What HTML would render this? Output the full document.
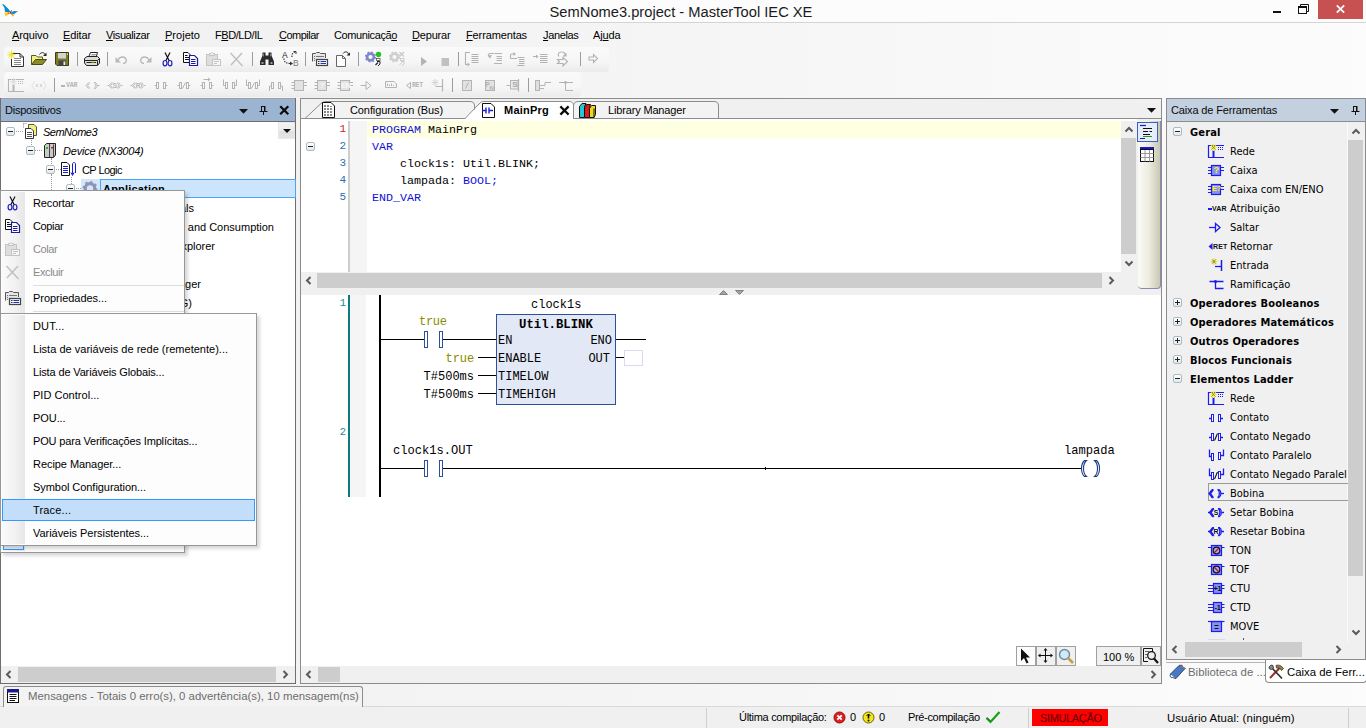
<!DOCTYPE html>
<html lang="pt-BR">
<head>
<meta charset="utf-8">
<title>SemNome3.project - MasterTool IEC XE</title>
<style>
html,body{margin:0;padding:0}
body{width:1366px;height:728px;overflow:hidden;background:#f0f0f0;position:relative;font-family:"Liberation Sans",sans-serif;font-size:11px;color:#000;-webkit-font-smoothing:antialiased}
.a{position:absolute}
.t{position:absolute;white-space:pre;line-height:14px;height:14px}
.mono{font-family:"Liberation Mono",monospace}
u{text-decoration:underline;text-underline-offset:1px}
svg{position:absolute;overflow:visible}
.sb{position:absolute;background:#f0f0f0}
.th{position:absolute;background:#cdcdcd}
.tsep{position:absolute;width:1px;height:14px;background:#9c9c9c}
.row{position:absolute;left:0;height:19px;white-space:pre;line-height:19px}
.mi{position:absolute;left:33px;white-space:pre;line-height:14px;height:14px}
.tb{position:absolute;white-space:pre;line-height:19px;height:19px;font-size:11px;font-family:"DejaVu Sans Condensed","DejaVu Sans","Liberation Sans",sans-serif}
.ld{margin-top:1px}
.ti{letter-spacing:0}
.tbb{font-weight:bold;font-size:11px;letter-spacing:0.170px}
</style>
</head>
<body>
<!-- title bar -->
<div class="a" style="left:0;top:0;width:1366px;height:22px;background:#fcfcfc"></div>
<div class="a" style="left:0;top:22px;width:1366px;height:1px;background:#d4d4d4"></div>
<div class="a" style="left:0;top:23px;width:1366px;height:683px;background:linear-gradient(to right,#f0f0f0 0%,#f4f4f4 40%,#fcfcfc 100%)"></div>
<svg style="left:0;top:0" width="22" height="20" viewBox="0 0 22 20">
<path d="M2 4L4 4.500L9 9.500L10.500 12L5 12L4.500 8Z" fill="#0a8ccc"/>
<path d="M11 12.500L14 11L18 11.200L15.500 13L14 14.200L11.500 13.500Z" fill="#0a8ccc"/>
<path d="M4 13L7 12.200L10 13L7.500 15L5.500 16.500L5.200 14.500Z" fill="#ffc808"/>
<path d="M7.500 12.300L10.200 12.800L8.500 14.300Z" fill="#e8402c"/>
<path d="M11 13.500L13 14L14 15.500L12.800 16.800L11.800 15Z" fill="#ffb010"/>
<path d="M11 13.300L13 14L12 15Z" fill="#e8302c"/>
<path d="M10.200 11.500L11.200 11.500L11.200 13.800L10.200 13.800Z" fill="#222"/>
<path d="M11 12L11.700 10" stroke="#333" stroke-width="0.600"/>
</svg>
<div class="t" style="left:0;width:1362px;top:2px;text-align:center;font-size:14.7px;line-height:20px;height:20px;color:#1b1b1b">SemNome3.project - MasterTool IEC XE</div>
<div class="a" style="left:1273px;top:11px;width:8px;height:2px;background:#111"></div>
<svg style="left:1298px;top:4px" width="11" height="10" viewBox="0 0 11 10"><path d="M2.5 2.5 V0.5 H10.5 V7.5 H8.5" fill="none" stroke="#111" stroke-width="1"/><rect x="0.5" y="2.5" width="8" height="7" fill="none" stroke="#111" stroke-width="1"/><rect x="0" y="2" width="9" height="2" fill="#111"/></svg>
<div class="a" style="left:1318px;top:0;width:45px;height:19px;background:#c75050"></div>
<svg style="left:1336px;top:5px" width="9" height="8" viewBox="0 0 9 8"><path d="M0.8 0.3 L8.2 7.7 M8.2 0.3 L0.8 7.7" stroke="#fff" stroke-width="1.7"/></svg>
<!-- menu bar -->
<div class="t" style="left:12px;top:28px;letter-spacing:-0.116px"><u>A</u>rquivo</div>
<div class="t" style="left:63px;top:28px;letter-spacing:-0.125px"><u>E</u>ditar</div>
<div class="t" style="left:106px;top:28px;letter-spacing:-0.400px"><u>V</u>isualizar</div>
<div class="t" style="left:165px;top:28px;letter-spacing:0.018px"><u>P</u>rojeto</div>
<div class="t" style="left:215px;top:28px;letter-spacing:-0.431px">F<u>B</u>D/LD/IL</div>
<div class="t" style="left:279px;top:28px;letter-spacing:-0.504px"><u>C</u>ompilar</div>
<div class="t" style="left:334px;top:28px;letter-spacing:-0.388px">Comunicaçã<u>o</u></div>
<div class="t" style="left:412px;top:28px;letter-spacing:-0.179px"><u>D</u>epurar</div>
<div class="t" style="left:466px;top:28px;letter-spacing:-0.125px"><u>F</u>erramentas</div>
<div class="t" style="left:543px;top:28px;letter-spacing:-0.346px"><u>J</u>anelas</div>
<div class="t" style="left:593px;top:28px;letter-spacing:-0.131px">Aj<u>u</u>da</div>
<!-- toolbars -->
<div class="a" style="left:4px;top:47px;width:605px;height:25px;border-radius:4px;background:linear-gradient(#fafafa,#f6f6f6 60%,#ebebeb)"></div>
<div class="a" style="left:4px;top:72px;width:577px;height:25px;border-radius:4px;background:linear-gradient(#fafafa,#f6f6f6 60%,#ebebeb)"></div>
<svg style="left:8px;top:51px" width="16" height="16" viewBox="0 0 16 16"><path d="M3.500 2.500H12L15.500 6V15.500H3.500Z" fill="#fff" stroke="#333"/><path d="M12 2.500V6H15.500" fill="none" stroke="#333"/><path d="M6 7.500H13M6 9.500H13M6 11.500H13M6 13.500H13" stroke="#8a8a8a"/><path d="M3.500 -0.500V8M-0.500 3.800H7.500M0.500 0.800L6.500 6.800M6.500 0.800L0.500 6.800" stroke="#ece21a" stroke-width="1"/></svg>
<svg style="left:31px;top:51px" width="16" height="16" viewBox="0 0 16 16"><path d="M0.500 13.500V4.500H5l1.500 1.500H11.500V8.500" fill="#f2f08a" stroke="#5a5a1a"/><path d="M0.500 13.500L4.500 8.500H15.500L11.500 13.500Z" fill="#8c8c28" stroke="#4a4a12"/><path d="M8.500 3.500C10 1 13 1 14 3.500" fill="none" stroke="#222"/><path d="M15.500 1.500V5H12Z" fill="#222"/></svg>
<svg style="left:54px;top:51px" width="16" height="16" viewBox="0 0 16 16"><path d="M1.500 1.500H14.500V14.500H3L1.500 13Z" fill="#7c7c24" stroke="#3c3c10"/><rect x="4" y="2" width="8" height="5.500" fill="#d4d4d4"/><rect x="4.500" y="9.500" width="7.500" height="5" fill="#444"/><rect x="9.500" y="10.500" width="1.800" height="3.500" fill="#eee"/><rect x="13" y="2.500" width="1" height="1.500" fill="#ddd"/></svg>
<div class="tsep" style="left:77px;top:52px"></div>
<svg style="left:84px;top:51px" width="16" height="16" viewBox="0 0 16 16"><path d="M4.500 6.500L6.500 1.500H13.500L12 6.500" fill="#fff" stroke="#222"/><path d="M7.500 3.500H12M7 5H11.500" stroke="#888" stroke-width="0.800"/><path d="M0.500 7.500L3 5.500H13.500L15.500 7.500V12L13.500 14.500H2.500L0.500 12Z" fill="#dcdcdc" stroke="#222"/><path d="M1 9.500H13.500L15.500 7.500M13.500 9.500V14" fill="none" stroke="#222"/><path d="M2.500 11.500H12" stroke="#222"/><rect x="7.500" y="10.300" width="3" height="1.200" fill="#e8d800"/></svg>
<div class="tsep" style="left:107px;top:52px"></div>
<svg style="left:114px;top:51px" width="16" height="16" viewBox="0 0 16 16"><path d="M4 9C5.500 5.500 10.500 5 12 8C13 10.500 11.500 12.500 9 12.500" fill="none" stroke="#b8b8b8" stroke-width="1.400"/><path d="M1.500 6V11.500H7Z" fill="#b8b8b8"/></svg>
<svg style="left:137px;top:51px" width="16" height="16" viewBox="0 0 16 16"><path d="M12 9C10.500 5.500 5.500 5 4 8C3 10.500 4.500 12.500 7 12.500" fill="none" stroke="#b8b8b8" stroke-width="1.400"/><path d="M14.500 6V11.500H9Z" fill="#b8b8b8"/></svg>
<svg style="left:160px;top:51px" width="16" height="16" viewBox="0 0 16 16"><path d="M5 1.500L9.300 10M10 1.500L5.700 10" fill="none" stroke="#111" stroke-width="1.200"/><ellipse cx="5" cy="12.200" rx="1.900" ry="2.700" fill="none" stroke="#2222bb" stroke-width="1.200"/><ellipse cx="10" cy="12.200" rx="1.900" ry="2.700" fill="none" stroke="#2222bb" stroke-width="1.200"/></svg>
<svg style="left:183px;top:51px" width="16" height="16" viewBox="0 0 16 16"><path d="M0.500 1.500H5L7.500 4V11.500H0.500Z" fill="#fff" stroke="#111"/><path d="M2 4.500H4.500M2 6.500H6M2 8.500H6" stroke="#111"/><path d="M6.500 4.500H11.500L14.500 7.500V14.500H6.500Z" fill="#fff" stroke="#1c1c9c" stroke-width="1.200"/><path d="M8 8.500H12.500M8 10.500H12.500M8 12.500H12.500" stroke="#1c1c9c"/></svg>
<svg style="left:206px;top:51px" width="16" height="16" viewBox="0 0 16 16"><rect x="0.500" y="3.500" width="11" height="11" fill="#dedede" stroke="#c4c4c4"/><path d="M3.500 4.500V2.500H5L6 1.500L7 2.500H8.500V4.500Z" fill="#ececec" stroke="#c4c4c4"/><rect x="6.500" y="8.500" width="8" height="6" fill="#f6f6f6" stroke="#c4c4c4"/><path d="M8 10.500H13M8 12.500H11" stroke="#c4c4c4"/></svg>
<svg style="left:229px;top:51px" width="16" height="16" viewBox="0 0 16 16"><path d="M1.500 2L13.500 15M13 2L2 14" stroke="#c0c0c0" stroke-width="1.500"/></svg>
<div class="tsep" style="left:252px;top:52px"></div>
<svg style="left:259px;top:51px" width="16" height="16" viewBox="0 0 16 16"><path d="M3.500 1.500H6.500V4.500H9.500V1.500H12.500V4.500L15 10.500V14H9.500V8.500H6.500V14H1V10.500L3.500 4.500Z" fill="#2a2a2a"/><path d="M4.500 2.500V5.500M11.500 2.500V5.500" stroke="#777"/><rect x="2.500" y="11" width="2" height="2" fill="#999"/><rect x="11.500" y="11" width="2" height="2" fill="#999"/></svg>
<div class="t" style="left:282px;top:50px;font-size:8.500px;color:#222;line-height:10px;height:10px">A</div>
<div class="t" style="left:293px;top:58px;font-size:8.500px;color:#777;line-height:10px;height:10px">B</div>
<svg style="left:282px;top:51px" width="16" height="16" viewBox="0 0 16 16"><path d="M10 6C9.500 3.500 11 1.500 13 1" fill="none" stroke="#333" stroke-dasharray="1.300 1.200" stroke-width="1.200"/><path d="M11.500 0.500H14V3" fill="none" stroke="#333"/><path d="M2 7.500C2 11 4.500 12.500 8.500 12.500" fill="none" stroke="#333" stroke-dasharray="1.300 1.200" stroke-width="1.200"/><path d="M8 10.500L11 12.500L8 14.500Z" fill="#333"/></svg>
<div class="tsep" style="left:305px;top:52px"></div>
<svg style="left:312px;top:51px" width="16" height="16" viewBox="0 0 16 16"><path d="M0.500 10.500V2.500H3.500L4.500 1.500H7.500L8.500 2.500H13.500V7" fill="#e6e6e6" stroke="#555"/><path d="M2 5.500H3M4 5.500H12M2 7.500H3M2 9.500H3" stroke="#777"/><rect x="4.500" y="8.500" width="11" height="6" fill="#f4f4f4" stroke="#444" stroke-width="1.200"/><path d="M6 10.500H7.500M6 12.500H7.500" stroke="#333"/><path d="M8.500 10.500H14M8.500 12.500H14" stroke="#2233bb" stroke-width="1.200"/></svg>
<svg style="left:335px;top:51px" width="16" height="16" viewBox="0 0 16 16"><path d="M1.500 4.500H7.500L10.500 7.500V15.500H1.500Z" fill="#fff" stroke="#666"/><path d="M7.500 4.500V7.500H10.500" fill="none" stroke="#666"/><path d="M8 2.500C10 0 13 0.500 13.500 3" fill="none" stroke="#222"/><path d="M15 1.500V4.500H11.500Z" fill="#222"/></svg>
<div class="tsep" style="left:358px;top:52px"></div>
<svg style="left:365px;top:51px" width="16" height="16" viewBox="0 0 16 16"><circle cx="5.5" cy="6" r="3.400" fill="none" stroke="#8086c8" stroke-width="2.600"/><circle cx="5.5" cy="6" r="4.900" fill="none" stroke="#8086c8" stroke-width="1.400" stroke-dasharray="1.900 1.950"/><circle cx="13.500" cy="3.500" r="2.400" fill="#12d012" stroke="#0a8a0a" stroke-width="0.500"/><rect x="11.500" y="7.500" width="3.500" height="2" fill="#fff" stroke="#555" stroke-width="0.800"/><path d="M12 10.500H15V13L13 15" fill="none" stroke="#222" stroke-width="1"/><path d="M10.500 14L13 11.500" stroke="#226" stroke-width="1.200"/></svg>
<svg style="left:389px;top:51px" width="16" height="16" viewBox="0 0 16 16"><circle cx="5.5" cy="6" r="3.400" fill="none" stroke="#cfcfcf" stroke-width="2.600"/><circle cx="5.5" cy="6" r="4.900" fill="none" stroke="#cfcfcf" stroke-width="1.400" stroke-dasharray="1.900 1.950"/><path d="M10.500 1L15 5.500M15 1L10.500 5.500" stroke="#c8c8c8" stroke-width="1.200"/><rect x="11.500" y="7.500" width="3.500" height="2" fill="#f4f4f4" stroke="#c8c8c8" stroke-width="0.800"/><path d="M12 10.500H15V13L13 15M10.500 14L13 11.500" fill="none" stroke="#c8c8c8" stroke-width="1"/></svg>
<svg style="left:415px;top:51px" width="16" height="16" viewBox="0 0 16 16"><path d="M6 6L12 10.5L6 15Z" fill="#b4b4b4"/></svg>
<svg style="left:437px;top:51px" width="16" height="16" viewBox="0 0 16 16"><rect x="4.500" y="7" width="7.500" height="8" fill="#c0c0c0"/></svg>
<div class="tsep" style="left:458px;top:52px"></div>
<svg style="left:463px;top:51px" width="16" height="16" viewBox="0 0 16 16"><path d="M7 1.500H2.500V13.500H5" fill="none" stroke="#b2b2b2" stroke-width="1.100"/><path d="M4.500 11.500L7 13.500L4.500 15.500Z" fill="#b2b2b2"/><path d="M8.500 3.500H15.500M8.500 5.500H15.500M8.500 7.500H15.500M8.500 9.500H15.500M8.500 11.500H15.500" stroke="#b2b2b2"/></svg>
<svg style="left:487px;top:51px" width="16" height="16" viewBox="0 0 16 16"><path d="M7 2.500H3Q1.500 2.500 1.500 4V5" fill="none" stroke="#b2b2b2" stroke-width="1.100"/><path d="M0.500 4.500L3 7.500L5 4Z" fill="#b2b2b2"/><path d="M7.500 2.500H15M9.500 5.500H15M9.500 7.500H15M9.500 9.500H15M7 12.500H15" stroke="#b2b2b2"/></svg>
<svg style="left:509px;top:51px" width="16" height="16" viewBox="0 0 16 16"><path d="M1.500 7.500V4.500Q1.500 3 3 3H5M1.500 7.500H8" fill="none" stroke="#b2b2b2" stroke-width="1.100"/><path d="M4.500 1L7 3L4.500 5Z" fill="#b2b2b2"/><path d="M8.500 6.500H15.500M10 8.500H15.500M10 10.500H15.500M10 12.500H15.500M8.500 14.500H15.500" stroke="#b2b2b2"/></svg>
<svg style="left:532px;top:51px" width="16" height="16" viewBox="0 0 16 16"><path d="M1 5.500H5" fill="none" stroke="#b2b2b2" stroke-width="1.100"/><path d="M4 3.500L6.500 5.500L4 7.500Z" fill="#b2b2b2"/><path d="M8 3.500H15.500M8 5.500H15.500M8 7.500H15.500M8 9.500H15.500M8 11.500H15.500" stroke="#b2b2b2"/></svg>
<svg style="left:555px;top:51px" width="16" height="16" viewBox="0 0 16 16"><path d="M4 5.500C2 3.500 4 0.500 7 1C9.500 1 10.500 3 10 4" fill="none" stroke="#b2b2b2" stroke-width="1.100"/><path d="M11.500 1.500V5.500H7.500Z" fill="#b2b2b2"/><path d="M2.500 8.500H8V6.500L12.500 10.500L8 15V12.500H2.500L4.500 10.500Z" fill="none" stroke="#b2b2b2" stroke-width="1.100"/></svg>
<div class="tsep" style="left:580px;top:52px"></div>
<svg style="left:585px;top:51px" width="16" height="16" viewBox="0 0 16 16"><path d="M4 6H8.500V3.500L12.500 7.500L8.500 11.500V9H4Z" fill="none" stroke="#b2b2b2" stroke-width="1.100"/></svg>
<svg style="left:8px;top:77px" width="16" height="16" viewBox="0 0 16 16"><path d="M16 2.500H0.500V14.500H16" fill="none" stroke="#b4b4b4" stroke-width="1.100"/><path d="M5.500 7.500V14.500" stroke="#b4b4b4" stroke-width="2"/><path d="M10 4.500H16M10 6.500H16" stroke="#b4b4b4" stroke-dasharray="1 1"/><path d="M5.500 1V8M2 4.500H9M3 2L8 7M8 2L3 7" stroke="#dcdcdc" stroke-width="0.900"/></svg>
<svg style="left:31px;top:77px" width="16" height="16" viewBox="0 0 16 16"><path d="M3.500 4.500L1 8.500L3.500 12.500M12.500 4.500L15 8.500L12.500 12.500" fill="none" stroke="#cfcfcf" stroke-dasharray="1.200 0.800"/><path d="M5 7L7 10M7 7L5 10M9 7L11 10M11 7L9 10" stroke="#cfcfcf" stroke-width="0.900"/></svg>
<div class="tsep" style="left:54px;top:78px"></div>
<div class="a" style="left:61px;top:85px;width:4px;height:2px;background:#b4b4b4"></div>
<div class="t mono" style="left:66px;top:81px;font-size:6.500px;font-weight:bold;color:#b4b4b4;letter-spacing:-0.100px;line-height:10px;height:10px">VAR</div>
<svg style="left:84px;top:77px" width="16" height="16" viewBox="0 0 16 16"><path d="M4.500 5.500L2 8.500L4.500 11.500M6 5.500L3.500 8.500L6 11.500" fill="none" stroke="#b4b4b4" stroke-width="0.900"/><path d="M10 5.500C12 6.500 12 10.500 10 11.500M11.500 5.500C13.500 6.500 13.500 10.500 11.500 11.500M10 5.500H11.500M10 11.500H11.500" fill="none" stroke="#b4b4b4" stroke-width="0.900"/><path d="M13 8.500H15.500" stroke="#b4b4b4"/></svg>
<svg style="left:107px;top:77px" width="16" height="16" viewBox="0 0 16 16"><path d="M0.500 8.500H2M14 8.500H15.500" stroke="#b4b4b4"/><path d="M4.500 5.500L2 8.500L4.500 11.500M6 5.500L3.500 8.500L6 11.500" fill="none" stroke="#b4b4b4" stroke-width="0.900"/><path d="M10 5.500C12 6.500 12 10.500 10 11.500M11.500 5.500C13.500 6.500 13.500 10.500 11.500 11.500" fill="none" stroke="#b4b4b4" stroke-width="0.900"/></svg>
<div class="t" style="left:112px;width:6px;text-align:center;top:81px;font-size:6.500px;font-weight:bold;color:#b4b4b4;line-height:10px;height:10px">S</div>
<svg style="left:130px;top:77px" width="16" height="16" viewBox="0 0 16 16"><path d="M0.500 8.500H2M14 8.500H15.500" stroke="#b4b4b4"/><path d="M4.500 5.500L2 8.500L4.500 11.500M6 5.500L3.500 8.500L6 11.500" fill="none" stroke="#b4b4b4" stroke-width="0.900"/><path d="M10 5.500C12 6.500 12 10.500 10 11.500M11.500 5.500C13.500 6.500 13.500 10.500 11.500 11.500" fill="none" stroke="#b4b4b4" stroke-width="0.900"/></svg>
<div class="t" style="left:135px;width:6px;text-align:center;top:81px;font-size:6.500px;font-weight:bold;color:#b4b4b4;line-height:10px;height:10px">R</div>
<svg style="left:153px;top:77px" width="16" height="16" viewBox="0 0 16 16"><path d="M1.500 8.500H3.500M12.500 8.500H14.500" stroke="#b4b4b4"/><rect x="3.500" y="5.500" width="2" height="6" fill="none" stroke="#b4b4b4"/><rect x="10.500" y="5.500" width="2" height="6" fill="none" stroke="#b4b4b4"/></svg>
<svg style="left:176px;top:77px" width="16" height="16" viewBox="0 0 16 16"><path d="M1.500 8.500H3.500M12.500 8.500H14.500" stroke="#b4b4b4"/><rect x="3.500" y="5.500" width="2" height="6" fill="none" stroke="#b4b4b4"/><rect x="10.500" y="5.500" width="2" height="6" fill="none" stroke="#b4b4b4"/><path d="M6.500 11.500L9.500 5.500" stroke="#b4b4b4"/></svg>
<svg style="left:199px;top:77px" width="16" height="16" viewBox="0 0 16 16"><path d="M1.500 8.500H3.500M12.500 8.500H14.500" stroke="#b4b4b4"/><rect x="3.500" y="5.500" width="2" height="6" fill="none" stroke="#b4b4b4"/><rect x="10.500" y="5.500" width="2" height="6" fill="none" stroke="#b4b4b4"/><path d="M4.500 2.500H10" stroke="#b4b4b4"/><path d="M9 0.500L11.500 2.500L9 4.500Z" fill="#b4b4b4"/></svg>
<svg style="left:222px;top:77px" width="16" height="16" viewBox="0 0 16 16"><path d="M1.500 2.500V8.500H3.500M12.500 8.500H14.500V2.500" fill="none" stroke="#b4b4b4"/><rect x="3.500" y="5.500" width="2" height="6" fill="none" stroke="#b4b4b4"/><rect x="10.500" y="5.500" width="2" height="6" fill="none" stroke="#b4b4b4"/></svg>
<svg style="left:245px;top:77px" width="16" height="16" viewBox="0 0 16 16"><path d="M1.500 2.500V8.500H3.500M12.500 8.500H14.500V2.500" fill="none" stroke="#b4b4b4"/><rect x="3.500" y="5.500" width="2" height="6" fill="none" stroke="#b4b4b4"/><rect x="10.500" y="5.500" width="2" height="6" fill="none" stroke="#b4b4b4"/><path d="M6.500 11.500L9.500 5.500" stroke="#b4b4b4"/></svg>
<svg style="left:268px;top:77px" width="16" height="16" viewBox="0 0 16 16"><path d="M1.500 14V9H3.500M12.500 9H14.500V14" fill="none" stroke="#b4b4b4"/><rect x="3.500" y="5.500" width="2" height="6" fill="none" stroke="#b4b4b4"/><rect x="10.500" y="5.500" width="2" height="6" fill="none" stroke="#b4b4b4"/></svg>
<svg style="left:291px;top:77px" width="16" height="16" viewBox="0 0 16 16"><rect x="3.500" y="3.500" width="9" height="10" fill="#e2e2e2" stroke="#b4b4b4"/><path d="M0.500 5.500H3.500M0.500 8.500H3.500M0.500 11.500H3.500M12.500 5.500H16M12.500 8.500H16" stroke="#b4b4b4"/></svg>
<svg style="left:314px;top:77px" width="16" height="16" viewBox="0 0 16 16"><rect x="3.500" y="3.500" width="9" height="10" fill="#e2e2e2" stroke="#b4b4b4"/><path d="M0.500 5.500H3.500M0.500 8.500H3.500M0.500 11.500H3.500M12.500 5.500H16M12.500 8.500H16" stroke="#b4b4b4"/></svg>
<div class="t" style="left:318px;width:8px;text-align:center;top:81px;font-size:7.500px;font-weight:bold;color:#f8f8f8;line-height:10px;height:10px;letter-spacing:-0.400px">?</div>
<svg style="left:337px;top:77px" width="16" height="16" viewBox="0 0 16 16"><rect x="3.500" y="3.500" width="9" height="10" fill="#e2e2e2" stroke="#b4b4b4"/><path d="M0.500 5.500H3.500M0.500 8.500H3.500M0.500 11.500H3.500M12.500 5.500H16M12.500 8.500H16" stroke="#b4b4b4"/></svg>
<div class="t" style="left:341px;width:8px;text-align:center;top:81px;font-size:7.500px;font-weight:bold;color:#f8f8f8;line-height:10px;height:10px;letter-spacing:-0.400px">EN</div>
<svg style="left:358px;top:77px" width="16" height="16" viewBox="0 0 16 16"><path d="M2.500 8.500H8" stroke="#b4b4b4"/><path d="M8 4.500L13 8.500L8 12.500Z" fill="none" stroke="#b4b4b4"/></svg>
<svg style="left:383px;top:77px" width="16" height="16" viewBox="0 0 16 16"><path d="M2.500 4.500H11L13.500 7V10.500H2.500Z" fill="#f6f6f6" stroke="#b4b4b4"/><path d="M4.500 6.500V9M6.500 7.500V9M8.500 6.500V9M10.500 8V9" stroke="#b4b4b4"/></svg>
<svg style="left:406px;top:77px" width="16" height="16" viewBox="0 0 16 16"><path d="M4.500 5.500L0.500 8.500L4.500 11.500Z" fill="none" stroke="#b4b4b4"/></svg>
<div class="t mono" style="left:412px;top:81px;font-size:6.500px;font-weight:bold;color:#b4b4b4;line-height:10px;height:10px;letter-spacing:-0.300px">RET</div>
<svg style="left:429px;top:77px" width="16" height="16" viewBox="0 0 16 16"><path d="M6 2V9M2.500 5.500H9.500M3.500 3L8.500 8M8.500 3L3.500 8" stroke="#d2d2d2" stroke-width="0.900"/><path d="M6.500 9.500H13" stroke="#b4b4b4"/><path d="M13.500 2V14.500" stroke="#b4b4b4" stroke-width="1.200"/></svg>
<div class="tsep" style="left:452px;top:78px"></div>
<svg style="left:459px;top:77px" width="16" height="16" viewBox="0 0 16 16"><rect x="3.500" y="3.500" width="9" height="10" fill="#e2e2e2" stroke="#b4b4b4"/><path d="M6.500 11.500L9.500 5.500" stroke="#b4b4b4" stroke-width="1"/></svg>
<svg style="left:482px;top:77px" width="16" height="16" viewBox="0 0 16 16"><rect x="3.500" y="3.500" width="9" height="10" fill="#e2e2e2" stroke="#b4b4b4"/></svg>
<div class="t" style="left:485.500px;top:80px;font-size:6.500px;font-weight:bold;color:#b4b4b4;line-height:10px;height:10px">P</div>
<div class="t" style="left:489.500px;top:83px;font-size:6px;font-weight:bold;color:#b4b4b4;line-height:10px;height:10px">N</div>
<svg style="left:505px;top:77px" width="16" height="16" viewBox="0 0 16 16"><rect x="5.500" y="3.500" width="7.500" height="8.500" fill="#ececec" stroke="#b4b4b4"/><path d="M1.500 8.500H5.500" stroke="#b4b4b4"/><path d="M13.500 2V14.500" stroke="#b4b4b4" stroke-width="1.200"/></svg>
<div class="t" style="left:511.500px;width:7px;text-align:center;top:80px;font-size:8px;font-weight:bold;color:#a8a8a8;line-height:10px;height:10px">S</div>
<div class="tsep" style="left:528px;top:78px"></div>
<svg style="left:535px;top:77px" width="16" height="16" viewBox="0 0 16 16"><rect x="0.500" y="3.500" width="4" height="10" fill="#dedede" stroke="#b4b4b4"/><path d="M4.500 8.500H10V5.500H16M4.500 11.500H9" fill="none" stroke="#b4b4b4"/></svg>
<svg style="left:558px;top:77px" width="16" height="16" viewBox="0 0 16 16"><path d="M1 5.500H15M7.500 5.500V13.500H15" fill="none" stroke="#b4b4b4"/><circle cx="7.500" cy="5.500" r="1.400" fill="#b4b4b4"/></svg>
<!-- left panel: Dispositivos -->
<div class="a" style="left:0;top:98px;width:296px;height:586px;background:#6e6e6e"></div>
<div class="a" style="left:1px;top:99px;width:294px;height:22px;background:#9bb4d2"></div>
<div class="a" style="left:1px;top:98px;width:294px;height:1px;background:#a0a0a0"></div>
<div class="a" style="left:1px;top:122px;width:294px;height:561px;background:#fff"></div>
<div class="t" style="left:5px;top:103px;color:#0a0a0a;letter-spacing:-0.224px">Dispositivos</div>
<svg style="left:239px;top:109px" width="9" height="5" viewBox="0 0 9 5"><path d="M0 0H9L4.5 4.8Z" fill="#111"/></svg>
<svg style="left:259px;top:105px" width="9" height="10" viewBox="0 0 9 10"><rect x="2.500" y="1.500" width="3" height="5" fill="none" stroke="#111" stroke-width="1"/><rect x="5" y="1" width="1.500" height="5" fill="#111"/><rect x="0.500" y="6" width="8" height="1" fill="#111"/><rect x="4" y="7" width="1" height="3" fill="#111"/></svg>
<svg style="left:280px;top:106px" width="9" height="9" viewBox="0 0 9 9"><path d="M1 1L7.500 7.500M7.500 1L1 7.500" stroke="#0a0a0a" stroke-width="2.200" stroke-linecap="square"/></svg>
<!-- tree dotted connectors -->
<div class="a" style="left:14px;top:131px;width:9px;border-top:1px dotted #9a9a9a"></div>
<div class="a" style="left:31px;top:137px;height:10px;border-left:1px dotted #9a9a9a"></div>
<div class="a" style="left:34px;top:150px;width:8px;border-top:1px dotted #9a9a9a"></div>
<div class="a" style="left:51px;top:158px;height:8px;border-left:1px dotted #9a9a9a"></div>
<div class="a" style="left:54px;top:169px;width:7px;border-top:1px dotted #9a9a9a"></div>
<div class="a" style="left:51px;top:174px;height:20px;border-left:1px dotted #9a9a9a"></div>
<div class="a" style="left:71px;top:177px;height:7px;border-left:1px dotted #9a9a9a"></div>
<div class="a" style="left:74px;top:188px;width:7px;border-top:1px dotted #9a9a9a"></div>
<!-- expanders -->
<div class="a" style="left:6px;top:127px;width:7px;height:7px;border:1px solid #a9bcc2;border-radius:2px;background:linear-gradient(#fff,#e3e8ea)"></div><div class="a" style="left:8px;top:131px;width:5px;height:1px;background:#222"></div>
<div class="a" style="left:26px;top:146px;width:7px;height:7px;border:1px solid #a9bcc2;border-radius:2px;background:linear-gradient(#fff,#e3e8ea)"></div><div class="a" style="left:28px;top:150px;width:5px;height:1px;background:#222"></div>
<div class="a" style="left:46px;top:165px;width:7px;height:7px;border:1px solid #a9bcc2;border-radius:2px;background:linear-gradient(#fff,#e3e8ea)"></div><div class="a" style="left:48px;top:169px;width:5px;height:1px;background:#222"></div>
<div class="a" style="left:66px;top:184px;width:7px;height:7px;border:1px solid #a9bcc2;border-radius:2px;background:linear-gradient(#fff,#e3e8ea)"></div><div class="a" style="left:68px;top:188px;width:5px;height:1px;background:#222"></div>
<!-- tree icons -->
<svg style="left:23px;top:123px" width="15" height="16" viewBox="0 0 15 16"><path d="M0.500 0.500H3.500" stroke="#888" stroke-dasharray="1 1"/><path d="M0.500 0.500V5" stroke="#888" stroke-dasharray="1 1"/><path d="M5.500 1.500H11L13.500 4V12.500H5.500Z" fill="#f4ee7a" stroke="#555"/><path d="M2.500 5.500H8L10.500 8V15.500H2.500Z" fill="#fff" stroke="#333"/><path d="M4 9.500H9M4 11.500H9M4 13.500H9" stroke="#555"/></svg>
<svg style="left:43px;top:142px" width="14" height="16" viewBox="0 0 14 16"><path d="M1.500 3.500L3.500 1.500H12.500V13L10.500 15.500H1.500Z" fill="#c9c9c9" stroke="#222"/><path d="M6.500 2V15M10.500 2.500V15" stroke="#444"/><rect x="3" y="5" width="2" height="2" fill="#18c018"/><rect x="8" y="5" width="2" height="1.500" fill="#d02020"/></svg>
<svg style="left:60px;top:161px" width="17" height="16" viewBox="0 0 17 16"><path d="M1.500 1.500H7L9.500 4V14.500H1.500Z" fill="#fff" stroke="#111"/><path d="M3 5.500H8M3 7.500H8M3 9.500H8M3 11.500H8" stroke="#1c1cd8"/><path d="M12.500 3C12.500 1 15.500 1 15.500 3V12" fill="none" stroke="#1c1cd8"/><path d="M12.500 3V13.500M11 11.500L12.500 14.500L14 11.500" fill="none" stroke="#1c1cd8"/></svg>
<div class="a" style="left:81px;top:179px;width:19px;height:19px;background:#d4e6fa"></div>
<svg style="left:82px;top:180px" width="16" height="16" viewBox="0 0 16 16"><circle cx="8" cy="8.500" r="4.800" fill="none" stroke="#8f93b8" stroke-width="3.200"/><circle cx="8" cy="8.500" r="6.600" fill="none" stroke="#8f93b8" stroke-width="1.800" stroke-dasharray="2.300 2.880"/></svg>
<!-- selected row -->
<div class="a" style="left:100px;top:179px;width:194px;height:17px;background:#cce4fc;border:1px solid #4ea3f7"></div>
<!-- tree labels -->
<div class="t" style="left:43px;top:125px;font-style:italic;letter-spacing:-0.510px">SemNome3</div>
<div class="t" style="left:63px;top:144px;font-style:italic;letter-spacing:-0.218px">Device (NX3004)</div>
<div class="t" style="left:82px;top:163px;letter-spacing:-0.580px">CP Logic</div>
<div class="t" style="left:103px;top:182px;font-weight:bold;letter-spacing:0.192px">Application</div>
<div class="t" style="left:0;width:194px;text-align:right;top:201px">Bill of Materials</div>
<div class="t" style="left:0;width:274px;text-align:right;top:220px">Configuration and Consumption</div>
<div class="t" style="left:0;width:215px;text-align:right;top:239px">Diagnostic Explorer</div>
<div class="t" style="left:0;width:201px;text-align:right;top:277px">Library Manager</div>
<div class="t" style="left:0;width:192px;text-align:right;top:296px">MainPrg (PRG)</div>
<!-- tree vscroll dropdown button -->
<div class="a" style="left:278px;top:122px;width:17px;height:17px;background:linear-gradient(#f3f3f3,#ececec 50%,#dfdfdf 50%,#e4e4e4);border:1px solid #e8e8e8;box-sizing:border-box"></div>
<svg style="left:283px;top:129px" width="8" height="4" viewBox="0 0 8 4"><path d="M0 0H8L4 4Z" fill="#111"/></svg>
<!-- tree hscroll -->
<div class="sb" style="left:1px;top:666px;width:294px;height:17px"></div>
<div class="th" style="left:18px;top:667px;width:258px;height:15px"></div>
<svg style="left:5px;top:670px" width="7" height="9" viewBox="0 0 7 9"><path d="M5.500 1L2 4.500L5.500 8" fill="none" stroke="#5a5a5a" stroke-width="2"/></svg>
<svg style="left:282px;top:670px" width="7" height="9" viewBox="0 0 7 9"><path d="M1.500 1L5 4.500L1.500 8" fill="none" stroke="#5a5a5a" stroke-width="2"/></svg>
<!-- center editor panel -->
<div class="a" style="left:300px;top:98px;width:862px;height:586px;background:#8c8c8c"></div>
<div class="a" style="left:301px;top:99px;width:860px;height:19px;background:#f0f0f0"></div>
<div class="a" style="left:301px;top:119px;width:860px;height:564px;background:#fff"></div>
<!-- tabs -->
<svg style="left:301px;top:100px" width="860" height="19" viewBox="0 0 860 19">
<path d="M4 18.500 L20 3.500 Q21.500 2 24 1.500 H169 Q173.500 1.500 173.500 6 V18.500" fill="#f3f3f3" stroke="#8c8c8c"/>
<path d="M272.500 18.500 V6 Q272.500 1.500 277 1.500 H413 Q417.500 1.500 417.500 6 V18.500" fill="#f3f3f3" stroke="#8c8c8c"/>
<path d="M0 18.500 H164 L178 4 Q180 1.500 183 1.500 H268 Q272.500 1.500 272.500 6 V18.500 H860" fill="none" stroke="#8c8c8c"/>
<path d="M164.500 19 L178.500 4.500 Q180 2 183 2 H268 Q272 2 272 6 V19Z" fill="#fff"/>
</svg>
<svg style="left:322px;top:102px" width="13" height="16" viewBox="0 0 13 16"><path d="M0.500 0.500H9L12.500 4V15.500H0.500Z" fill="#fff" stroke="#111"/><path d="M2 3H4V5H2ZM5 3H7V5H5ZM8 4H10V5H8ZM2 6H4V8H2ZM5 6H7V8H5ZM8 6H10V8H8ZM2 9H4V11H2ZM5 9H7V11H5ZM8 9H10V11H8ZM2 12H4V14H2ZM5 12H7V14H5ZM8 12H10V14H8Z" fill="#8a8a8a"/></svg>
<div class="t" style="left:350px;top:103px;letter-spacing:-0.094px">Configuration (Bus)</div>
<svg style="left:482px;top:103px" width="13" height="15" viewBox="0 0 13 15"><path d="M0.500 0.500H9L12.500 4V14.500H0.500Z" fill="#fff" stroke="#111"/><path d="M0 7.500H3.500M7.500 7.500H11M4 4.500V10.500M7 4.500V10.500" stroke="#1c1cd8" stroke-width="1.400"/></svg>
<div class="t" style="left:504px;top:103px;font-weight:bold;letter-spacing:0.228px">MainPrg</div>
<svg style="left:560px;top:106px" width="9" height="9" viewBox="0 0 9 9"><path d="M1.200 1.200L7.800 7.800M7.800 1.200L1.200 7.800" stroke="#0a0a0a" stroke-width="2.300" stroke-linecap="square"/></svg>
<svg style="left:579px;top:102px" width="17" height="16" viewBox="0 0 17 16"><path d="M0.500 4.500L3 1.500H7L5.500 4.500V15.500H0.500Z" fill="#22c8d8" stroke="#111"/><path d="M5.500 5.500L7.500 2.500H11.500L10.500 5.500V15.500H5.500Z" fill="#e01818" stroke="#111"/><path d="M10.500 6.500L12.500 3.500H16.500V12.500L15 15.500H10.500Z" fill="#f0d818" stroke="#111"/><path d="M15 6.500V15.500" stroke="#111"/></svg>
<div class="t" style="left:608px;top:103px;letter-spacing:-0.160px">Library Manager</div>
<svg style="left:1147px;top:108px" width="9" height="5" viewBox="0 0 9 5"><path d="M0 0H9L4.500 4.800Z" fill="#111"/></svg>
<!-- declaration editor -->
<div class="a" style="left:348px;top:121px;width:2px;height:151px;background:#cecece"></div>
<div class="a" style="left:350px;top:121px;width:17px;height:151px;background:#f5f5f5"></div>
<div class="a" style="left:367px;top:121px;width:754px;height:17px;background:#ffffe1"></div>
<div class="t mono" style="left:320px;width:26px;text-align:right;top:122px;font-size:11px;color:#d02020">1</div>
<div class="t mono" style="left:320px;width:26px;text-align:right;top:139px;font-size:11px;color:#2b6fb5">2</div>
<div class="t mono" style="left:320px;width:26px;text-align:right;top:156px;font-size:11px;color:#2b6fb5">3</div>
<div class="t mono" style="left:320px;width:26px;text-align:right;top:173px;font-size:11px;color:#2b6fb5">4</div>
<div class="t mono" style="left:320px;width:26px;text-align:right;top:190px;font-size:11px;color:#2b6fb5">5</div>
<div class="a" style="left:306px;top:142px;width:7px;height:7px;border:1px solid #a9bcc2;border-radius:2px;background:linear-gradient(#fff,#e3e8ea)"></div><div class="a" style="left:308px;top:146px;width:5px;height:1px;background:#222"></div>
<div class="t mono" style="left:372px;top:123px;font-size:11.670px"><span style="color:#1010d8">PROGRAM</span> MainPrg</div>
<div class="t mono" style="left:372px;top:140px;font-size:11.670px;color:#1010d8">VAR</div>
<div class="t mono" style="left:372px;top:157px;font-size:11.670px">    clock1s: Util.BLINK;</div>
<div class="t mono" style="left:372px;top:174px;font-size:11.670px">    lampada: <span style="color:#1010d8">BOOL;</span></div>
<div class="t mono" style="left:372px;top:191px;font-size:11.670px;color:#1010d8">END_VAR</div>
<!-- decl vscroll -->
<div class="sb" style="left:1121px;top:121px;width:17px;height:151px"></div>
<div class="th" style="left:1121px;top:138px;width:15px;height:116px"></div>
<svg style="left:1124px;top:126px" width="10" height="7" viewBox="0 0 10 7"><path d="M1.500 5.500L5 2L8.500 5.500" fill="none" stroke="#5a5a5a" stroke-width="2"/></svg>
<svg style="left:1124px;top:260px" width="10" height="7" viewBox="0 0 10 7"><path d="M1.500 1.500L5 5L8.500 1.500" fill="none" stroke="#5a5a5a" stroke-width="2"/></svg>
<!-- decl hscroll -->
<div class="sb" style="left:301px;top:272px;width:837px;height:17px"></div>
<div class="th" style="left:317px;top:273px;width:785px;height:15px"></div>
<svg style="left:305px;top:276px" width="7" height="9" viewBox="0 0 7 9"><path d="M5.500 1L2 4.500L5.500 8" fill="none" stroke="#5a5a5a" stroke-width="2"/></svg>
<svg style="left:1108px;top:276px" width="7" height="9" viewBox="0 0 7 9"><path d="M1.500 1L5 4.500L1.500 8" fill="none" stroke="#5a5a5a" stroke-width="2"/></svg>
<!-- right tool strip -->
<div class="a" style="left:1137px;top:119px;width:24px;height:176px;background:#f0f0f0"></div>
<div class="a" style="left:1138px;top:121px;width:22px;height:167px;background:linear-gradient(to right,#fbfbf6,#ecebdf 50%,#c9c8b2);border-radius:0 0 4px 4px;border-bottom:1px solid #8a8ab4;border-right:1px solid #8a8ab4"></div>
<div class="a" style="left:1137px;top:122px;width:19px;height:18px;background:#e6ecf8;border:1px solid #3b5fc4"></div>
<svg style="left:1140px;top:125px" width="14" height="14" viewBox="0 0 14 14"><path d="M0 0.500H6" stroke="#1818d0" stroke-width="1.200"/><path d="M3 3.500H12M3 6.500H8M3 9.500H10M9.500 6.500H12" stroke="#111"/><path d="M3 11.500H12" stroke="#18a018"/><path d="M0 13.500H5" stroke="#1818d0"/></svg>
<svg style="left:1140px;top:147px" width="15" height="16" viewBox="0 0 15 16"><rect x="0.500" y="2.500" width="13" height="12" fill="#fff" stroke="#111"/><path d="M0 1H14" stroke="#1818d0" stroke-width="2"/><path d="M0.500 6.500H13.500M0.500 10.500H13.500M5 3V14.500M9.500 3V14.500" stroke="#999"/></svg>
<!-- splitter -->
<div class="a" style="left:301px;top:289px;width:860px;height:6px;background:#f0f0f0"></div>
<svg style="left:719px;top:290px" width="26" height="5" viewBox="0 0 26 5"><path d="M0.500 4.500L4.500 0.500L8.500 4.500Z" fill="#a4a4a4" stroke="#6e6e6e" stroke-width="0.800"/><path d="M16.500 0.500H24.500L20.500 4.500Z" fill="#a4a4a4" stroke="#6e6e6e" stroke-width="0.800"/></svg>
<!-- ladder editor -->
<div class="a" style="left:348px;top:295px;width:2px;height:202px;background:#0e7c7c"></div>
<div class="a" style="left:350px;top:295px;width:16px;height:202px;background:#f5f5f5"></div>
<div class="a" style="left:379px;top:295px;width:2px;height:202px;background:#000"></div>
<div class="t mono ld" style="left:320px;width:26px;text-align:right;top:295px;font-size:10.500px;color:#1a8c8c">1</div>
<div class="t mono ld" style="left:320px;width:26px;text-align:right;top:424px;font-size:10.500px;color:#1a8c8c">2</div>
<!-- network 1 -->
<div class="a" style="left:381px;top:339px;width:116px;height:1px;background:#000"></div>
<div class="a" style="left:424px;top:331px;width:2px;height:15px;border:1px solid #2e4f9a;background:#fff"></div>
<div class="a" style="left:439px;top:331px;width:2px;height:15px;border:1px solid #2e4f9a;background:#fff"></div>
<div class="a" style="left:428px;top:339px;width:11px;height:1px;background:#fff"></div>
<div class="t mono ld" style="left:419px;top:314px;font-size:12px;color:#8b8b00;letter-spacing:-0.300px">true</div>
<div class="t mono ld" style="left:531px;top:297px;font-size:12px">clock1s</div>
<div class="a" style="left:496px;top:314px;width:118px;height:89px;border:1px solid #2e4f9a;background:#e2e8f6"></div>
<div class="t mono ld" style="left:519px;top:317px;font-size:12.300px;font-weight:bold">Util.BLINK</div>
<div class="t mono ld" style="left:498px;top:333px;font-size:12px">EN</div>
<div class="t mono ld" style="left:498px;top:351px;font-size:12px">ENABLE</div>
<div class="t mono ld" style="left:498px;top:369px;font-size:12px">TIMELOW</div>
<div class="t mono ld" style="left:498px;top:387px;font-size:12px">TIMEHIGH</div>
<div class="t mono ld" style="left:562px;width:50px;text-align:right;top:333px;font-size:12px">ENO</div>
<div class="t mono ld" style="left:560px;width:50px;text-align:right;top:351px;font-size:12px">OUT</div>
<div class="t mono ld" style="left:423px;width:51px;text-align:right;top:351px;font-size:12px;color:#8b8b00;letter-spacing:-0.100px">true</div>
<div class="t mono ld" style="left:413px;width:61px;text-align:right;top:369px;font-size:12px">T#500ms</div>
<div class="t mono ld" style="left:413px;width:61px;text-align:right;top:387px;font-size:12px">T#500ms</div>
<div class="a" style="left:478px;top:357px;width:18px;height:1px;background:#000"></div>
<div class="a" style="left:478px;top:375px;width:18px;height:1px;background:#000"></div>
<div class="a" style="left:478px;top:393px;width:18px;height:1px;background:#000"></div>
<div class="a" style="left:616px;top:339px;width:30px;height:1px;background:#000"></div>
<div class="a" style="left:616px;top:357px;width:8px;height:1px;background:#000"></div>
<div class="a" style="left:624px;top:350px;width:17px;height:14px;border:1px solid #d9d9f3;background:#fff"></div>
<!-- network 2 -->
<div class="t mono ld" style="left:393px;top:443px;font-size:12.100px">clock1s.OUT</div>
<div class="a" style="left:381px;top:468px;width:701px;height:1px;background:#000"></div>
<div class="a" style="left:424px;top:460px;width:2px;height:15px;border:1px solid #2e4f9a;background:#fff"></div>
<div class="a" style="left:439px;top:460px;width:2px;height:15px;border:1px solid #2e4f9a;background:#fff"></div>
<div class="a" style="left:428px;top:468px;width:11px;height:1px;background:#fff"></div>
<div class="a" style="left:765px;top:467px;width:1px;height:3px;background:#000"></div>
<div class="t mono ld" style="left:1064px;top:443px;font-size:12.100px">lampada</div>
<svg style="left:1080px;top:459px" width="22" height="19" viewBox="0 0 22 19"><path d="M6.500 1.500C2.500 5 2.500 14 6.500 17.500H4.500C0.500 14 0.500 5 4.500 1.500Z" fill="#fff" stroke="#1f3f8a" stroke-width="1.100"/><path d="M14.500 1.500C18.500 5 18.500 14 14.500 17.500H16.500C20.500 14 20.500 5 16.500 1.500Z" fill="#fff" stroke="#1f3f8a" stroke-width="1.100"/></svg>
<!-- bottom-right tools -->
<div class="a" style="left:1016px;top:646px;width:20px;height:20px;background:#fdfdfd;border:1px solid #a0a0a0;box-sizing:border-box"></div>
<div class="a" style="left:1036px;top:646px;width:20px;height:20px;background:#f0f0f0;border:1px solid #a0a0a0;box-sizing:border-box"></div>
<div class="a" style="left:1056px;top:646px;width:20px;height:20px;background:#f0f0f0;border:1px solid #a0a0a0;box-sizing:border-box"></div>
<svg style="left:1020px;top:648px" width="12" height="17" viewBox="0 0 12 17"><path d="M1 0.500V13L4 10L6.500 15.500L8.500 14.500L6 9.500H10Z" fill="#111"/></svg>
<svg style="left:1038px;top:648px" width="16" height="16" viewBox="0 0 16 16"><path d="M7.500 1V14M1 7.500H14" stroke="#111"/><path d="M7.500 0L9.500 2.500H5.500ZM7.500 15L9.500 12.500H5.500ZM0 7.500L2.500 5.500V9.500ZM15 7.500L12.500 5.500V9.500Z" fill="#111"/></svg>
<svg style="left:1058px;top:648px" width="17" height="17" viewBox="0 0 17 17"><circle cx="6.500" cy="6.500" r="5" fill="#cfeaf6" stroke="#6a8aa8" stroke-width="1.400"/><path d="M10 10L15 15" stroke="#c8a040" stroke-width="2.600"/></svg>
<div class="a" style="left:1096px;top:646px;width:45px;height:20px;background:#f0f0f0;border:1px solid #a0a0a0;box-sizing:border-box"></div>
<div class="t" style="left:1103px;top:650px;font-size:11px">100 %</div>
<div class="a" style="left:1141px;top:646px;width:20px;height:20px;background:#f0f0f0;border:1px solid #a0a0a0;box-sizing:border-box"></div>
<svg style="left:1143px;top:648px" width="16" height="16" viewBox="0 0 16 16"><path d="M0.500 0.500H9.500V4M0.500 0.500V13.500H5" fill="none" stroke="#111"/><circle cx="8.500" cy="7.500" r="3.800" fill="#eee" stroke="#111" stroke-width="1.300"/><path d="M11 10.500L15 15" stroke="#111" stroke-width="2.200"/><path d="M2 3.500H6M2 6.500H4M2 9.500H4" stroke="#666"/></svg>
<!-- bottom hscroll -->
<div class="sb" style="left:301px;top:666px;width:860px;height:17px"></div>
<div class="th" style="left:318px;top:667px;width:22px;height:15px"></div>
<svg style="left:305px;top:670px" width="7" height="9" viewBox="0 0 7 9"><path d="M5.500 1L2 4.500L5.500 8" fill="none" stroke="#5a5a5a" stroke-width="2"/></svg>
<svg style="left:1150px;top:670px" width="7" height="9" viewBox="0 0 7 9"><path d="M1.500 1L5 4.500L1.500 8" fill="none" stroke="#5a5a5a" stroke-width="2"/></svg>
<!-- right panel: Caixa de Ferramentas -->
<div class="a" style="left:1166px;top:98px;width:200px;height:562px;background:#8c8c8c"></div>
<div class="a" style="left:1167px;top:99px;width:198px;height:22px;background:#c3d0e0"></div>
<div class="a" style="left:1167px;top:122px;width:198px;height:537px;background:#f0f0f0"></div>
<div class="t" style="left:1171px;top:103px;color:#0a0a0a;letter-spacing:-0.141px">Caixa de Ferramentas</div>
<svg style="left:1330px;top:109px" width="9" height="5" viewBox="0 0 9 5"><path d="M0 0H9L4.500 4.800Z" fill="#111"/></svg>
<svg style="left:1351px;top:105px" width="9" height="10" viewBox="0 0 9 10"><rect x="2.500" y="1.500" width="3" height="5" fill="none" stroke="#111" stroke-width="1"/><rect x="5" y="1" width="1.500" height="5" fill="#111"/><rect x="0.500" y="6" width="8" height="1" fill="#111"/><rect x="4" y="7" width="1" height="3" fill="#111"/></svg>
<div class="sb" style="left:1347px;top:122px;width:18px;height:520px;border-left:1px solid #fafafa;box-sizing:border-box"></div>
<div class="th" style="left:1348px;top:140px;width:15px;height:436px"></div>
<svg style="left:1351px;top:128px" width="10" height="7" viewBox="0 0 10 7"><path d="M1.500 5.500L5 2L8.500 5.500" fill="none" stroke="#5a5a5a" stroke-width="2"/></svg>
<svg style="left:1351px;top:629px" width="10" height="7" viewBox="0 0 10 7"><path d="M1.500 1.500L5 5L8.500 1.500" fill="none" stroke="#5a5a5a" stroke-width="2"/></svg>
<div class="sb" style="left:1167px;top:642px;width:198px;height:17px"></div>
<div class="th" style="left:1185px;top:642px;width:117px;height:15px"></div>
<svg style="left:1171px;top:645px" width="7" height="9" viewBox="0 0 7 9"><path d="M5.500 1L2 4.500L5.500 8" fill="none" stroke="#5a5a5a" stroke-width="2"/></svg>
<svg style="left:1335px;top:645px" width="7" height="9" viewBox="0 0 7 9"><path d="M1.500 1L5 4.500L1.500 8" fill="none" stroke="#5a5a5a" stroke-width="2"/></svg>
<div class="a" style="left:1173px;top:127px;width:7px;height:7px;border:1px solid #a9bcc2;border-radius:2px;background:linear-gradient(#fff,#e3e8ea)"></div><div class="a" style="left:1175px;top:131px;width:5px;height:1px;background:#222"></div>
<div class="tb tbb" style="left:1190px;top:123px">Geral</div>
<svg style="left:1208px;top:144px" width="17" height="16" viewBox="0 0 17 16"><path d="M16 1.500H0.500V13.500H16" fill="none" stroke="#1c1cf0" stroke-width="1.200"/><path d="M5.500 6.500V13.500" stroke="#1c1cf0" stroke-width="2"/><path d="M10 3.500H16M10 5.500H16" stroke="#1c1cf0" stroke-dasharray="1 1"/><path d="M5.500 0V7M2 3.500H9M3 1L8 6M8 1L3 6" stroke="#f4ec20" stroke-width="1.100"/><path d="M3.500 1.500L7.500 5.500M7.500 1.500L3.500 5.500" stroke="#555" stroke-width="0.500"/></svg>
<div class="tb ti" style="left:1230px;top:142px">Rede</div>
<svg style="left:1208px;top:162px" width="17" height="16" viewBox="0 0 17 16"><rect x="3.500" y="3.500" width="9" height="10" fill="#8590f2" stroke="#1c1cf0" stroke-width="1.200"/><path d="M0 5.500H3.500M0 8.500H3.500M0 11.500H3.500M12.500 5.500H16M12.500 8.500H16" stroke="#1c1cf0" stroke-width="1.200"/></svg>
<div class="t" style="left:1212px;width:8px;text-align:center;top:165px;font-size:9px;font-weight:bold;color:#fff020;line-height:10px;height:10px;letter-spacing:-0.500px">?</div>
<div class="tb ti" style="left:1230px;top:161px">Caixa</div>
<svg style="left:1208px;top:181px" width="17" height="16" viewBox="0 0 17 16"><rect x="3.500" y="3.500" width="9" height="10" fill="#8590f2" stroke="#1c1cf0" stroke-width="1.200"/><path d="M0 5.500H3.500M0 8.500H3.500M0 11.500H3.500M12.500 5.500H16M12.500 8.500H16" stroke="#1c1cf0" stroke-width="1.200"/></svg>
<div class="t" style="left:1212px;width:8px;text-align:center;top:184px;font-size:7.5px;font-weight:bold;color:#fff020;line-height:10px;height:10px;letter-spacing:-0.500px">E?</div>
<div class="tb ti" style="left:1230px;top:180px">Caixa com EN/ENO</div>
<div class="a" style="left:1208px;top:208px;width:4px;height:2px;background:#1c1cf0"></div>
<div class="t" style="left:1212px;top:204px;font-size:7px;font-weight:bold;color:#111;line-height:10px;height:10px;letter-spacing:0.100px">VAR</div>
<div class="tb ti" style="left:1230px;top:199px">Atribuição</div>
<svg style="left:1208px;top:219px" width="17" height="16" viewBox="0 0 17 16"><path d="M1 8.500H8" stroke="#1c1cf0" stroke-width="1.300"/><path d="M7.500 4.500L12 8.500L7.500 12.500Z" fill="none" stroke="#1c1cf0" stroke-width="1.300"/></svg>
<div class="tb ti" style="left:1230px;top:218px">Saltar</div>
<svg style="left:1208px;top:238px" width="17" height="16" viewBox="0 0 17 16"><path d="M4.500 5L0.500 8.500L4.500 12Z" fill="#1c1cf0"/></svg>
<div class="t" style="left:1213px;top:242px;font-size:7px;font-weight:bold;color:#111;line-height:10px;height:10px;letter-spacing:0.100px">RET</div>
<div class="tb ti" style="left:1230px;top:237px">Retornar</div>
<svg style="left:1208px;top:257px" width="17" height="16" viewBox="0 0 17 16"><path d="M6 1V8M2.500 4.500H9.500M3.500 2L8.500 7M8.500 2L3.500 7" stroke="#e8d820" stroke-width="1"/><path d="M4.500 2.500L7.500 6.500M7.500 2.500L4.500 6.500" stroke="#555" stroke-width="0.600"/><path d="M7 9.500H13" stroke="#1c1cf0" stroke-width="1.300"/><path d="M13.500 3V14" stroke="#1c1cf0" stroke-width="1.500"/></svg>
<div class="tb ti" style="left:1230px;top:256px">Entrada</div>
<svg style="left:1208px;top:276px" width="17" height="16" viewBox="0 0 17 16"><path d="M1.500 5.500H15.500M7.500 5.500V12.500H15.500" fill="none" stroke="#1c1cf0" stroke-width="1.300"/><circle cx="7.500" cy="5.500" r="1.500" fill="#1c1cf0"/></svg>
<div class="tb ti" style="left:1230px;top:275px">Ramificação</div>
<div class="a" style="left:1173px;top:298px;width:7px;height:7px;border:1px solid #a9bcc2;border-radius:2px;background:linear-gradient(#fff,#e3e8ea)"></div><div class="a" style="left:1175px;top:302px;width:5px;height:1px;background:#222"></div>
<div class="a" style="left:1177px;top:300px;width:1px;height:5px;background:#222"></div>
<div class="tb tbb" style="left:1190px;top:294px">Operadores Booleanos</div>
<div class="a" style="left:1173px;top:317px;width:7px;height:7px;border:1px solid #a9bcc2;border-radius:2px;background:linear-gradient(#fff,#e3e8ea)"></div><div class="a" style="left:1175px;top:321px;width:5px;height:1px;background:#222"></div>
<div class="a" style="left:1177px;top:319px;width:1px;height:5px;background:#222"></div>
<div class="tb tbb" style="left:1190px;top:313px">Operadores Matemáticos</div>
<div class="a" style="left:1173px;top:336px;width:7px;height:7px;border:1px solid #a9bcc2;border-radius:2px;background:linear-gradient(#fff,#e3e8ea)"></div><div class="a" style="left:1175px;top:340px;width:5px;height:1px;background:#222"></div>
<div class="a" style="left:1177px;top:338px;width:1px;height:5px;background:#222"></div>
<div class="tb tbb" style="left:1190px;top:332px">Outros Operadores</div>
<div class="a" style="left:1173px;top:355px;width:7px;height:7px;border:1px solid #a9bcc2;border-radius:2px;background:linear-gradient(#fff,#e3e8ea)"></div><div class="a" style="left:1175px;top:359px;width:5px;height:1px;background:#222"></div>
<div class="a" style="left:1177px;top:357px;width:1px;height:5px;background:#222"></div>
<div class="tb tbb" style="left:1190px;top:351px">Blocos Funcionais</div>
<div class="a" style="left:1173px;top:374px;width:7px;height:7px;border:1px solid #a9bcc2;border-radius:2px;background:linear-gradient(#fff,#e3e8ea)"></div><div class="a" style="left:1175px;top:378px;width:5px;height:1px;background:#222"></div>
<div class="tb tbb" style="left:1190px;top:370px">Elementos Ladder</div>
<svg style="left:1208px;top:391px" width="17" height="16" viewBox="0 0 17 16"><path d="M16 1.500H0.500V13.500H16" fill="none" stroke="#1c1cf0" stroke-width="1.200"/><path d="M5.500 6.500V13.500" stroke="#1c1cf0" stroke-width="2"/><path d="M10 3.500H16M10 5.500H16" stroke="#1c1cf0" stroke-dasharray="1 1"/><path d="M5.500 0V7M2 3.500H9M3 1L8 6M8 1L3 6" stroke="#f4ec20" stroke-width="1.100"/><path d="M3.500 1.500L7.500 5.500M7.500 1.500L3.500 5.500" stroke="#555" stroke-width="0.500"/></svg>
<div class="tb ti" style="left:1230px;top:389px">Rede</div>
<svg style="left:1208px;top:409px" width="17" height="16" viewBox="0 0 17 16"><path d="M1 9.500H3.500M12.500 9.500H15" stroke="#1c1cf0" stroke-width="1.300"/><rect x="3.500" y="5.500" width="2" height="7" fill="#fff" stroke="#1c1cf0" stroke-width="1"/><rect x="10.500" y="5.500" width="2" height="7" fill="#fff" stroke="#1c1cf0" stroke-width="1"/></svg>
<div class="tb ti" style="left:1230px;top:408px">Contato</div>
<svg style="left:1208px;top:428px" width="17" height="16" viewBox="0 0 17 16"><path d="M1 9.500H3.500M12.500 9.500H15" stroke="#1c1cf0" stroke-width="1.300"/><rect x="3.500" y="5.500" width="2" height="7" fill="#fff" stroke="#1c1cf0" stroke-width="1"/><rect x="10.500" y="5.500" width="2" height="7" fill="#fff" stroke="#1c1cf0" stroke-width="1"/><path d="M6.500 12.500L9.500 5.500" stroke="#111" stroke-width="1.100"/></svg>
<div class="tb ti" style="left:1230px;top:427px">Contato Negado</div>
<svg style="left:1208px;top:447px" width="17" height="16" viewBox="0 0 17 16"><path d="M1.500 2.500V9.500H3.500M12.500 8.500H15.500V2.500" fill="none" stroke="#1c1cf0" stroke-width="1.300"/><rect x="3.500" y="6.500" width="2" height="7" fill="#fff" stroke="#1c1cf0" stroke-width="1"/><rect x="10.500" y="5.500" width="2" height="7" fill="#fff" stroke="#1c1cf0" stroke-width="1"/></svg>
<div class="tb ti" style="left:1230px;top:446px">Contato Paralelo</div>
<svg style="left:1208px;top:466px" width="17" height="16" viewBox="0 0 17 16"><path d="M1.500 2.500V9.500H3.500M12.500 8.500H15.500V2.500" fill="none" stroke="#1c1cf0" stroke-width="1.300"/><rect x="3.500" y="6.500" width="2" height="7" fill="#fff" stroke="#1c1cf0" stroke-width="1"/><rect x="10.500" y="5.500" width="2" height="7" fill="#fff" stroke="#1c1cf0" stroke-width="1"/><path d="M6.500 13L9.500 6" stroke="#111" stroke-width="1.100"/></svg>
<div class="tb ti" style="left:1230px;top:465px;width:117px;overflow:hidden">Contato Negado Paralelo</div>
<div class="a" style="left:1208px;top:483px;width:140px;height:18px;border:1px solid #9a9a9a;border-right:none;box-sizing:border-box"></div>
<svg style="left:1208px;top:485px" width="17" height="16" viewBox="0 0 17 16"><path d="M4 4.500L1 8.500L4 12.500M5.500 4.500L2.500 8.500L5.500 12.500M4 4.500H5.500M4 12.500H5.500" fill="none" stroke="#1c1cf0" stroke-width="1.250"/><path d="M9.500 4.500C12 6 12 11 9.500 12.500M11 4.500C13.500 6 13.500 11 11 12.500M9.500 4.500H11M9.500 12.500H11" fill="none" stroke="#1c1cf0" stroke-width="1.250"/><path d="M13 8.500H16" stroke="#1c1cf0" stroke-width="1.300"/></svg>
<div class="tb ti" style="left:1230px;top:484px">Bobina</div>
<svg style="left:1208px;top:504px" width="17" height="16" viewBox="0 0 17 16"><path d="M0 8.500H2M14 8.500H16" stroke="#1c1cf0" stroke-width="1.300"/><path d="M4.500 4.500L1.500 8.500L4.500 12.500M6 4.500L3 8.500L6 12.500M4.500 4.500H6M4.500 12.500H6" fill="none" stroke="#1c1cf0" stroke-width="1.250"/><path d="M10 4.500C12.500 6 12.500 11 10 12.500M11.500 4.500C14 6 14 11 11.500 12.500M10 4.500H11.500M10 12.500H11.500" fill="none" stroke="#1c1cf0" stroke-width="1.250"/></svg>
<div class="t" style="left:1213px;width:6px;text-align:center;top:508px;font-size:7px;font-weight:bold;color:#111;line-height:10px;height:10px">S</div>
<div class="tb ti" style="left:1230px;top:503px">Setar Bobina</div>
<svg style="left:1208px;top:523px" width="17" height="16" viewBox="0 0 17 16"><path d="M0 8.500H2M14 8.500H16" stroke="#1c1cf0" stroke-width="1.300"/><path d="M4.500 4.500L1.500 8.500L4.500 12.500M6 4.500L3 8.500L6 12.500M4.500 4.500H6M4.500 12.500H6" fill="none" stroke="#1c1cf0" stroke-width="1.250"/><path d="M10 4.500C12.500 6 12.500 11 10 12.500M11.500 4.500C14 6 14 11 11.500 12.500M10 4.500H11.500M10 12.500H11.500" fill="none" stroke="#1c1cf0" stroke-width="1.250"/></svg>
<div class="t" style="left:1213px;width:6px;text-align:center;top:527px;font-size:7px;font-weight:bold;color:#111;line-height:10px;height:10px">R</div>
<div class="tb ti" style="left:1230px;top:522px">Resetar Bobina</div>
<svg style="left:1208px;top:542px" width="17" height="16" viewBox="0 0 17 16"><rect x="3.500" y="3.500" width="10" height="10" fill="#8590f2" stroke="#1c1cf0" stroke-width="1.200"/><path d="M0 5.500H3.500M13.500 5.500H16.500" stroke="#1c1cf0" stroke-width="1.200"/><circle cx="8.500" cy="8.500" r="3.300" fill="#a8a8f8" stroke="#111" stroke-width="1.200"/><path d="M6.500 10.500L10.500 6.500" stroke="#c01010" stroke-width="1.200"/></svg>
<div class="tb ti" style="left:1230px;top:541px">TON</div>
<svg style="left:1208px;top:561px" width="17" height="16" viewBox="0 0 17 16"><rect x="3.500" y="3.500" width="10" height="10" fill="#8590f2" stroke="#1c1cf0" stroke-width="1.200"/><path d="M0 5.500H3.500M13.500 5.500H16.500" stroke="#1c1cf0" stroke-width="1.200"/><circle cx="8.500" cy="8.500" r="3.300" fill="#a8a8f8" stroke="#111" stroke-width="1.200"/><path d="M6.500 6.500L10.500 10.500" stroke="#c01010" stroke-width="1.200"/></svg>
<div class="tb ti" style="left:1230px;top:560px">TOF</div>
<svg style="left:1208px;top:580px" width="17" height="16" viewBox="0 0 17 16"><rect x="5.500" y="3.500" width="8" height="10" fill="#8590f2" stroke="#1c1cf0" stroke-width="1.200"/><path d="M0 5.500H5.500M0 8.500H5.500M0 11.500H5.500M13.500 5.500H16.500M13.500 8.500H16.500" stroke="#1c1cf0" stroke-width="1.200"/></svg>
<div class="t" style="left:1212.500px;width:10px;text-align:center;top:584px;font-size:7.500px;font-weight:bold;color:#111;line-height:10px;height:10px;letter-spacing:-0.300px">+1</div>
<div class="tb ti" style="left:1230px;top:579px">CTU</div>
<svg style="left:1208px;top:599px" width="17" height="16" viewBox="0 0 17 16"><rect x="5.500" y="3.500" width="8" height="10" fill="#8590f2" stroke="#1c1cf0" stroke-width="1.200"/><path d="M0 5.500H5.500M0 8.500H5.500M0 11.500H5.500M13.500 5.500H16.500M13.500 8.500H16.500" stroke="#1c1cf0" stroke-width="1.200"/></svg>
<div class="t" style="left:1212.500px;width:10px;text-align:center;top:603px;font-size:7.500px;font-weight:bold;color:#111;line-height:10px;height:10px;letter-spacing:-0.300px">-1</div>
<div class="tb ti" style="left:1230px;top:598px">CTD</div>
<svg style="left:1208px;top:618px" width="17" height="16" viewBox="0 0 17 16"><rect x="3.500" y="3.500" width="10" height="10" fill="#8590f2" stroke="#1c1cf0" stroke-width="1.200"/><path d="M0 3.500H16.500" stroke="#1c1cf0" stroke-width="1.200"/><path d="M6.500 7.500H10.500M6.500 10.500H10.500" stroke="#111" stroke-width="1.200"/></svg>
<div class="tb ti" style="left:1230px;top:617px">MOVE</div>
<div class="a" style="left:1208px;top:639px;width:17px;height:1px;background:#d8d8ee"></div>
<div class="a" style="left:1243px;top:638px;width:1px;height:2px;background:#555"></div>
<div class="a" style="left:1166px;top:662px;width:100px;height:1px;background:#b4b4b4"></div>
<div class="a" style="left:1265px;top:660px;width:102px;height:23px;border:1px solid #8c8c8c;border-top:none;border-radius:0 0 4px 4px;box-sizing:border-box;background:#fff"></div>
<svg style="left:1169px;top:664px" width="17" height="16" viewBox="0 0 17 16"><path d="M1.500 10L10 1.500L15.500 5L7 14.500Z" fill="#4a78c0" stroke="#28487c"/><path d="M1.500 10C0.500 12 1.500 14 3.500 13.500L7 14.500" fill="#e8eef8" stroke="#28487c"/><path d="M10 1.500L11 1L16.500 4.500L15.500 5" fill="#8fb0dc" stroke="#28487c" stroke-width="0.800"/><path d="M11 1.500L13 0.500L14 2.500Z" fill="#e02020"/></svg>
<div class="t" style="left:1188px;top:665px;color:#6d6d6d;font-size:11.400px">Biblioteca de ...</div>
<svg style="left:1268px;top:664px" width="17" height="16" viewBox="0 0 17 16"><path d="M2 14L12 3.500" stroke="#a03028" stroke-width="2"/><path d="M8 1.500C10.500 0.500 13.500 1.500 15.500 4.500L13.500 6.500C12.500 4.500 10.500 3.500 8.500 4Z" fill="#8a8430" stroke="#333" stroke-width="0.800"/><path d="M3.500 3.500L14 14.500" stroke="#333" stroke-width="1.800"/><path d="M1 3L3 1L5 1.500L5.500 4L3.500 5.500L1.500 5Z" fill="#888" stroke="#333" stroke-width="0.800"/></svg>
<div class="t" style="left:1287px;top:665px;font-size:11.400px">Caixa de Ferr...</div>
<!-- messages tab + status bar -->
<div class="a" style="left:0;top:706px;width:1366px;height:1px;background:#d9d9d9"></div>
<div class="a" style="left:3px;top:686px;width:360px;height:21px;border:1px solid #8c8c8c;border-bottom:none;border-radius:3px 3px 0 0;box-sizing:border-box;background:#f3f3f3"></div>
<svg style="left:7px;top:689px" width="12" height="14" viewBox="0 0 12 14"><rect x="0.500" y="0.500" width="11" height="13" fill="#fff" stroke="#111"/><rect x="0.500" y="0.500" width="11" height="2.500" fill="#18188c" stroke="#18188c"/><path d="M2.500 5.500H9.500M2.500 7.500H9.500M2.500 9.500H9.500M2.500 11.500H8" stroke="#111"/></svg>
<div class="t" style="left:28px;top:689px;color:#6d6d6d;font-size:11.400px">Mensagens - Totais 0 erro(s), 0 advertência(s), 10 mensagem(ns)</div>
<div class="a" style="left:706px;top:708px;width:1px;height:20px;background:#cfcfcf"></div>
<div class="a" style="left:1028px;top:708px;width:1px;height:20px;background:#cfcfcf"></div>
<div class="a" style="left:1348px;top:708px;width:1px;height:20px;background:#cfcfcf"></div>
<div class="t" style="left:739px;top:710px;letter-spacing:-0.296px">Última compilação:</div>
<svg style="left:833px;top:711px" width="13" height="13" viewBox="0 0 13 13"><circle cx="6.500" cy="6.500" r="5.500" fill="#e02020" stroke="#8c0a0a"/><path d="M4.300 4.300L8.700 8.700M8.700 4.300L4.300 8.700" stroke="#fff" stroke-width="1.800"/></svg>
<div class="t" style="left:850px;top:710px">0</div>
<svg style="left:862px;top:711px" width="13" height="13" viewBox="0 0 13 13"><circle cx="6.500" cy="6.500" r="5.500" fill="#f4e61c" stroke="#6a6200"/><path d="M6.500 3V7.500" stroke="#111" stroke-width="1.600"/><circle cx="6.500" cy="9.600" r="1" fill="#111"/><path d="M4.500 5L6.500 3L8.500 5" fill="none" stroke="#111" stroke-width="1"/></svg>
<div class="t" style="left:879px;top:710px">0</div>
<div class="t" style="left:908px;top:710px;letter-spacing:-0.337px">Pré-compilação</div>
<svg style="left:985px;top:710px" width="16" height="14" viewBox="0 0 16 14"><path d="M1.500 8L5.500 12L14.500 2" fill="none" stroke="#18a018" stroke-width="2.200"/><path d="M2 7.500L5.500 11" stroke="#0c5c0c" stroke-width="0.800"/></svg>
<div class="a" style="left:1032px;top:709px;width:76px;height:17px;background:#fe0000"></div>
<div class="t" style="left:1040px;top:711px;color:#5c0000;letter-spacing:-0.355px">SIMULAÇÃO</div>
<div class="t" style="left:1167px;top:711px;font-size:11.400px;letter-spacing:0.100px">Usuário Atual: (ninguém)</div>
<!-- context menu (level 1) -->
<div class="a" style="left:0;top:190px;width:185px;height:363px;box-sizing:border-box;border:1px solid #979797;background:#fdfdfd;box-shadow:3px 3px 3px rgba(0,0,0,0.150)"></div>
<div class="a" style="left:2px;top:192px;width:23px;height:359px;background:linear-gradient(to right,#fafafa,#f1f1f1 60%,#e6e6e6)"></div>
<svg style="left:5px;top:195px" width="16" height="16" viewBox="0 0 16 16"><path d="M5 1.500L9.300 10M10 1.500L5.700 10" fill="none" stroke="#111" stroke-width="1.200"/><ellipse cx="5" cy="12.200" rx="1.900" ry="2.700" fill="none" stroke="#2222bb" stroke-width="1.200"/><ellipse cx="10" cy="12.200" rx="1.900" ry="2.700" fill="none" stroke="#2222bb" stroke-width="1.200"/></svg>
<svg style="left:5px;top:218px" width="16" height="16" viewBox="0 0 16 16"><path d="M0.500 1.500H5L7.500 4V11.500H0.500Z" fill="#fff" stroke="#111"/><path d="M2 4.500H4.500M2 6.500H6M2 8.500H6" stroke="#111"/><path d="M6.500 4.500H11.500L14.500 7.500V14.500H6.500Z" fill="#fff" stroke="#1c1c9c" stroke-width="1.200"/><path d="M8 8.500H12.500M8 10.500H12.500M8 12.500H12.500" stroke="#1c1c9c"/></svg>
<svg style="left:5px;top:241px" width="16" height="16" viewBox="0 0 16 16"><rect x="0.500" y="3.500" width="11" height="11" fill="#dedede" stroke="#c4c4c4"/><path d="M3.500 4.500V2.500H5L6 1.500L7 2.500H8.500V4.500Z" fill="#ececec" stroke="#c4c4c4"/><rect x="6.500" y="8.500" width="8" height="6" fill="#f6f6f6" stroke="#c4c4c4"/><path d="M8 10.500H13M8 12.500H11" stroke="#c4c4c4"/></svg>
<svg style="left:5px;top:264px" width="16" height="16" viewBox="0 0 16 16"><path d="M1.500 2L13.500 15M13 2L2 14" stroke="#c0c0c0" stroke-width="1.500"/></svg>
<svg style="left:5px;top:290px" width="16" height="16" viewBox="0 0 16 16"><path d="M0.500 10.500V2.500H3.500L4.500 1.500H7.500L8.500 2.500H13.500V7" fill="#e6e6e6" stroke="#555"/><path d="M2 5.500H3M4 5.500H12M2 7.500H3M2 9.500H3" stroke="#777"/><rect x="4.500" y="8.500" width="11" height="6" fill="#f4f4f4" stroke="#444" stroke-width="1.200"/><path d="M6 10.500H7.500M6 12.500H7.500" stroke="#333"/><path d="M8.500 10.500H14M8.500 12.500H14" stroke="#2233bb" stroke-width="1.200"/></svg>
<div class="mi" style="top:196px;letter-spacing:-0.123px">Recortar</div>
<div class="mi" style="top:219px;letter-spacing:-0.368px">Copiar</div>
<div class="mi" style="top:242px;color:#8a8a8a;letter-spacing:-0.399px">Colar</div>
<div class="mi" style="top:265px;color:#8a8a8a;letter-spacing:-0.402px">Excluir</div>
<div class="a" style="left:33px;top:285px;width:151px;height:1px;background:#dedede"></div>
<div class="mi" style="top:291px;letter-spacing:-0.034px">Propriedades...</div>
<div class="a" style="left:33px;top:311px;width:151px;height:1px;background:#dedede"></div>
<div class="a" style="left:3px;top:528px;width:21px;height:22px;box-sizing:border-box;border:1px solid #3399ff;background:#e3eefb"></div>
<!-- submenu (level 2) -->
<div class="a" style="left:0;top:313px;width:257px;height:233px;box-sizing:border-box;border:1px solid #979797;background:#fdfdfd;box-shadow:3px 3px 3px rgba(0,0,0,0.150)"></div>
<div class="a" style="left:2px;top:315px;width:23px;height:229px;background:linear-gradient(to right,#fafafa,#f1f1f1 60%,#e6e6e6)"></div>
<div class="a" style="left:2px;top:499px;width:253px;height:22px;box-sizing:border-box;border:1px solid #3399ff;background:#c2defa"></div>
<div class="mi" style="top:319px;letter-spacing:0.173px">DUT...</div>
<div class="mi" style="top:342px;letter-spacing:0.016px">Lista de variáveis de rede (remetente)...</div>
<div class="mi" style="top:365px;letter-spacing:-0.146px">Lista de Variáveis Globais...</div>
<div class="mi" style="top:388px;letter-spacing:0.026px">PID Control...</div>
<div class="mi" style="top:411px;letter-spacing:-0.069px">POU...</div>
<div class="mi" style="top:434px;letter-spacing:-0.162px">POU para Verificações Implícitas...</div>
<div class="mi" style="top:457px;letter-spacing:-0.058px">Recipe Manager...</div>
<div class="mi" style="top:480px;letter-spacing:-0.054px">Symbol Configuration...</div>
<div class="mi" style="top:503px;letter-spacing:0.164px">Trace...</div>
<div class="mi" style="top:526px;letter-spacing:-0.044px">Variáveis Persistentes...</div>
</body>
</html>
